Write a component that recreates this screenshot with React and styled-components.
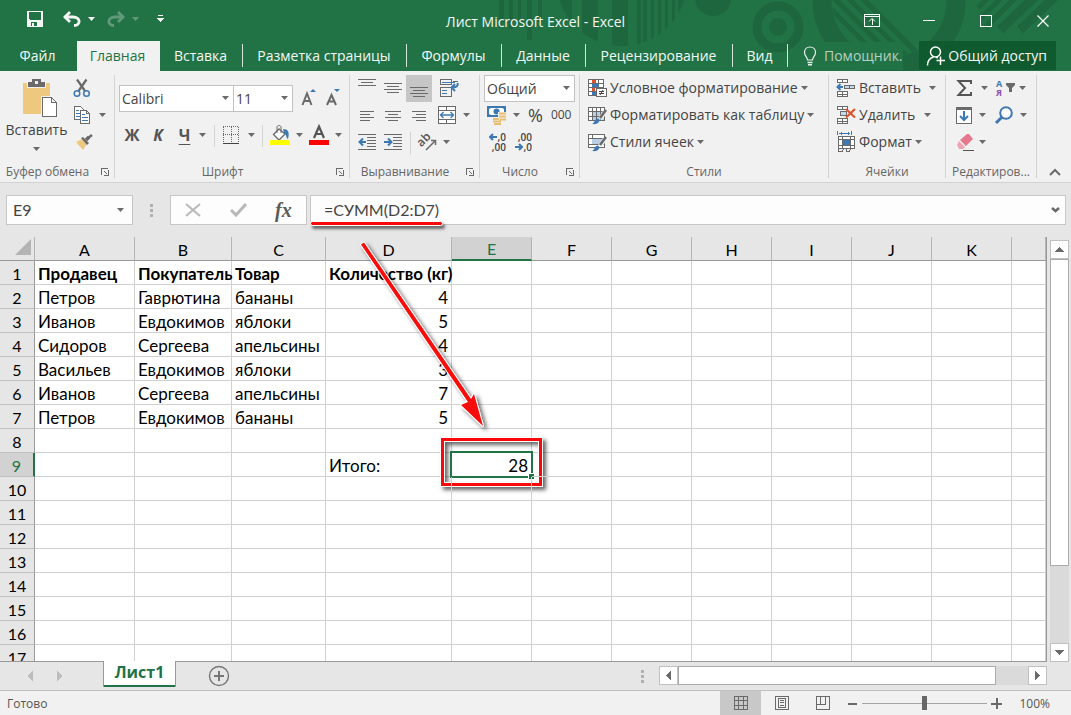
import React from "react";
import styled, { createGlobalStyle, css } from "styled-components";

const GREEN = "#217346";
const INK = "#6a6a6a";
const BLUE = "#3e78b3";
const RED = "#f80808";
const UI_FONT = '"Open Sans", "Noto Sans", sans-serif';
const CELL_FONT = 'Lato, "Noto Sans", sans-serif';

const GlobalStyle = createGlobalStyle`
  *, *::before, *::after { box-sizing: border-box; }
  body { margin: 0; font-family: ${UI_FONT}; font-size: 14px; color: #444; background: #e6e6e6; }
  button, input, select { font: inherit; color: inherit; margin: 0; }
  button { border: 0; padding: 0; background: none; cursor: pointer; }
  svg { display: block; flex: none; }
`;

const Window = styled.div`
  display: flex;
  flex-direction: column;
  height: 100vh;
  min-height: 480px;
  overflow: hidden;
`;

/* ---------- title bar and tabs ---------- */

const Header = styled.header`
  position: relative;
  background: ${GREEN};
  color: #f3f8f5;
  flex: none;
`;

const Ornament = styled.svg`
  position: absolute;
  top: 0;
  right: 0;
`;

const TitleBar = styled.div`
  position: relative;
  display: grid;
  grid-template-columns: 1fr auto 1fr;
  align-items: center;
  height: 41px;
`;

const QuickAccess = styled.div`
  display: flex;
  align-items: center;
  padding: 0 0 3px 26px;
`;

const QuickButton = styled.button`
  display: flex;
  align-items: center;
  height: 24px;
  gap: 6px;
  margin-right: ${(p) => p.$after || 18}px;
  opacity: ${(p) => (p.disabled ? 0.3 : 1)};
`;

const Title = styled.h1`
  margin: 0;
  padding-top: 2px;
  font-size: 14px;
  font-weight: 400;
`;

const WindowButtons = styled.div`
  display: flex;
  justify-content: flex-end;
`;

const WindowButton = styled.button`
  display: flex;
  align-items: center;
  justify-content: center;
  width: 57px;
  height: 38px;
`;

const TabRow = styled.nav`
  position: relative;
  display: flex;
  height: 30px;
`;

const RibbonTab = styled.button`
  position: relative;
  flex: none;
  width: ${(p) => p.$width}px;
  padding: 0 2px 2px 0;
  white-space: nowrap;
  ${(p) =>
    p.$active
      ? css`
          background: #f1f1f1;
          color: ${GREEN};
        `
      : css`
          &::after {
            content: "";
            position: absolute;
            right: 0;
            top: 3px;
            bottom: 4px;
            border-right: ${p.$plain ? 0 : 1}px solid #d6e5dc;
          }
        `}
`;

const TellMe = styled.button`
  display: flex;
  align-items: center;
  gap: 7px;
  padding: 0 0 0 15px;
  margin-right: auto;
  white-space: nowrap;
`;

const TellMeText = styled.span`
  background: ${GREEN};
  color: #b6d0c1;
  line-height: 28px;
`;

const ShareButton = styled.button`
  display: flex;
  align-items: center;
  gap: 2px;
  padding: 0 9px 0 7px;
  margin: 0 15px 1px 0;
  background: #0f5a2f;
  white-space: nowrap;
`;

/* ---------- ribbon ---------- */

const Ribbon = styled.div`
  display: flex;
  flex: none;
  height: 112px;
  padding: 4px 0;
  background: #f1f1f1;
  border-bottom: 1px solid #d2d2d2;
`;

const Group = styled.section`
  display: flex;
  flex-direction: column;
  flex: none;
  width: ${(p) => p.$width}px;
  border-right: 1px solid #d2d2d2;
`;

const GroupBody = styled.div`
  display: flex;
  flex: 1;
  padding: 0 ${(p) => p.$pad || 0}px;
`;

const GroupFooter = styled.div`
  display: flex;
  align-items: center;
  gap: 10px;
  height: 14px;
  padding: 0 5px;
`;

const GroupLabel = styled.h2`
  flex: 1;
  margin: 0;
  font-size: 12px;
  font-weight: 400;
  color: #666;
  text-align: center;
  white-space: nowrap;
`;

const Rows = styled.div`
  display: flex;
  flex-direction: column;
`;

const ToolRow = styled.div`
  display: flex;
  align-items: center;
  height: ${(p) => p.$height || 27}px;
  gap: ${(p) => p.$gap || 0}px;
  padding-left: ${(p) => p.$indent || 0}px;
`;

const Tool = styled.button`
  display: flex;
  align-items: center;
  justify-content: flex-start;
  gap: ${(p) => p.$gap ?? 6}px;
  width: ${(p) => (p.$width ? p.$width + "px" : "auto")};
  height: 27px;
  padding-bottom: 2px;
  flex: none;
  white-space: nowrap;
  ${(p) =>
    p.$pressed &&
    css`
      background: #c6c6c6;
    `}
`;

const CenterTool = styled(Tool)`
  justify-content: center;
`;

const PasteButton = styled.button`
  display: flex;
  flex-direction: column;
  align-items: center;
  width: 73px;
  padding-top: 3px;
  height: 84px;
`;

const PasteText = styled.span`
  line-height: 22px;
  padding-bottom: 6px;
`;

const Letter = styled.span`
  font-size: 16px;
  font-weight: 700;
  line-height: 20px;
  color: #555;
  font-style: ${(p) => (p.$italic ? "italic" : "normal")};
  text-decoration: ${(p) => (p.$underline ? "underline" : "none")};
  text-underline-offset: 3px;
  text-decoration-thickness: 1px;
`;

const NumberSign = styled.span`
  font-size: ${(p) => (p.$small ? 12 : 18)}px;
  color: #444;
`;

const Separator = styled.span`
  width: 1px;
  height: 22px;
  background: #d2d2d2;
`;

const SelectBox = styled.span`
  position: relative;
  display: block;
  width: ${(p) => p.$width}px;
  height: 27px;
  margin-right: -1px;
  border: 1px solid #c2c2c2;
  background: #fff;
`;

const Select = styled.select`
  appearance: none;
  display: block;
  width: 100%;
  height: 25px;
  padding: 0 18px 0 2px;
  border: 0;
  outline: 0;
  background: transparent;
`;

const SelectArrow = styled.span`
  position: absolute;
  right: 4px;
  top: 10px;
  pointer-events: none;
`;

const CollapseCorner = styled.div`
  flex: 1;
  display: flex;
  justify-content: flex-end;
  align-items: flex-end;
  padding: 0 10px 1px 0;
`;

/* ---------- formula bar ---------- */

const FormulaBar = styled.div`
  display: flex;
  flex: none;
  height: 54px;
  padding: 12px 5px 12px 6px;
`;

const NameBox = styled.label`
  display: flex;
  align-items: center;
  width: 127px;
  padding-right: 8px;
  border: 1px solid #c6c6c6;
  background: #fdfdfd;
`;

const BarInput = styled.input`
  flex: 1;
  min-width: 0;
  padding: 0 0 2px ${(p) => p.$indent}px;
  border: 0;
  outline: 0;
  background: transparent;
  font-family: ${CELL_FONT};
  font-size: 16px;
`;

const Grip = styled.span`
  display: flex;
  flex-direction: column;
  justify-content: center;
  gap: 2px;
  width: ${(p) => p.$width}px;
  align-items: center;
`;

const GripDot = styled.i`
  width: 3px;
  height: 3px;
  background: #b0b0b0;
`;

const FormulaActions = styled.div`
  display: flex;
  align-items: center;
  justify-content: space-around;
  width: 137px;
  margin-right: 3px;
  border: 1px solid #c6c6c6;
  background: #fdfdfd;
`;

const FxLabel = styled.span`
  font: italic 700 20px "Liberation Serif", serif;
  color: #5a5a5a;
`;

const FormulaBox = styled.div`
  position: relative;
  flex: 1;
  display: flex;
  align-items: center;
  padding-right: 5px;
  border: 1px solid #c6c6c6;
  background: #fdfdfd;
`;

const Underline = styled.span`
  position: absolute;
  left: -1px;
  bottom: -2px;
  width: 133px;
  height: 5px;
  border: 1px solid #fff;
  border-radius: 3px;
  background: ${RED};
  box-shadow: 2px 3px 3px rgba(0, 0, 0, 0.55);
`;

/* ---------- sheet ---------- */

const Workspace = styled.main`
  display: flex;
  flex: 1;
  min-height: 0;
  padding-right: 2px;
`;

const SheetViewport = styled.div`
  position: relative;
  flex: 1;
  min-width: 0;
  overflow: hidden;
  border-right: 1px solid #999;
  border-bottom: 1px solid #999;
  background: linear-gradient(#e6e6e6 24px, #fff 24px);
`;

const Grid = styled.table`
  width: 100%;
  table-layout: fixed;
  border-collapse: separate;
  border-spacing: 0;
  font-family: ${CELL_FONT};
  font-size: 17px;
  color: #000;
`;

const Col = styled.col`
  width: ${(p) => (p.$width ? p.$width + "px" : "auto")};
`;

const Corner = styled.td`
  height: 24px;
  padding: 0 3px 3px;
  border-bottom: 1px solid #999;
  border-right: 1px solid #b4b4b4;
  background: #e6e6e6;
`;

const CornerMark = styled.svg`
  margin-left: auto;
`;

const HeadCell = styled.th`
  height: 24px;
  padding: 2px 0 0;
  font-weight: 400;
  font-size: 16px;
  line-height: 21px;
  text-align: center;
  background: ${(p) => (p.$active ? "#d2d2d2" : "#e6e6e6")};
  color: ${(p) => (p.$active ? GREEN : "#000")};
`;

const ColumnHead = styled(HeadCell)`
  border-right: 1px solid #b4b4b4;
  border-bottom: 1px solid #999;
  ${(p) =>
    p.$active &&
    css`
      line-height: 20px;
      border-bottom: 2px solid ${GREEN};
    `}
`;

const RowHead = styled(HeadCell)`
  border-right: 1px solid #999;
  border-bottom: 1px solid #c0c0c0;
  ${(p) =>
    p.$active &&
    css`
      border-right: 2px solid ${GREEN};
    `}
`;

const Cell = styled.td`
  position: relative;
  height: 24px;
  padding: 2px 3px 0;
  line-height: 21px;
  white-space: nowrap;
  border-right: 1px solid #d0d0d0;
  border-bottom: 1px solid #d0d0d0;
  font-weight: ${(p) => (p.$bold ? 700 : 400)};
  text-align: ${(p) => (p.$number ? "right" : "left")};
`;

const Selection = styled.span`
  position: absolute;
  inset: -2px;
  border: 2px solid ${GREEN};

  &::after {
    content: "";
    position: absolute;
    right: -3px;
    bottom: -3px;
    width: 6px;
    height: 6px;
    background: ${GREEN};
    border: solid #fff;
    border-width: 1px 0 0 1px;
  }
`;

const Highlight = styled.span`
  position: absolute;
  inset: -15px -11px -10px -11px;
  border: 3px solid ${RED};
  outline: 1px solid #fff;
  box-shadow: inset 0 0 0 1px #fff, 3px 3px 4px 1px rgba(0, 0, 0, 0.6),
    inset 3px 3px 4px 1px rgba(0, 0, 0, 0.6);
`;

const Arrow = styled.svg`
  position: absolute;
  left: 350px;
  top: 0;
  pointer-events: none;
`;

const VerticalScroll = styled.div`
  display: flex;
  flex-direction: column;
  width: 19px;
  margin: 3px 0 0 3px;
  background: #dadada;
`;

const ScrollButton = styled.button`
  display: flex;
  align-items: center;
  justify-content: center;
  width: 19px;
  height: 19px;
  flex: none;
  border: 1px solid #c0c0c0;
  background: #fff;
`;

const ScrollThumb = styled.div`
  flex: ${(p) => p.$size};
  border: 1px solid #ababab;
  background: #fff;
`;

const ScrollTrack = styled.div`
  flex: ${(p) => p.$size};
`;

/* ---------- sheet tabs and status bar ---------- */

const SheetBar = styled.div`
  display: flex;
  flex: none;
  height: 28px;
  padding-right: 24px;
`;

const SheetNav = styled.div`
  display: flex;
  width: 103px;
  padding-left: 27px;
  gap: 24px;
`;

const NavButton = styled.button`
  height: 28px;
`;

const SheetTab = styled.button`
  position: relative;
  width: 73px;
  height: 26px;
  margin-top: -1px;
  padding-bottom: 4px;
  font-size: 16px;
  line-height: 20px;
  font-weight: 700;
  color: ${GREEN};
  background: #fff;
  border: solid #999;
  border-width: 0 1px;
  box-shadow: inset 0 -2px 0 ${GREEN};
`;

const AddSheet = styled.button`
  margin: 0 auto 0 32px;
`;

const HorizontalScroll = styled.div`
  display: flex;
  width: 388px;
  height: 19px;
  margin-top: 4px;
  background: #dadada;
`;

const StatusBar = styled.footer`
  display: flex;
  align-items: center;
  flex: none;
  height: 25px;
  padding-right: 21px;
  border-top: 1px solid #c0c0c0;
  background: #f1f1f1;
  font-size: 12px;
  color: #555;
`;

const StatusText = styled.span`
  flex: 1;
  padding-left: 7px;
`;

const ViewButton = styled.button`
  display: flex;
  align-items: center;
  justify-content: center;
  width: 41px;
  height: 24px;
  background: ${(p) => (p.$active ? "#c8c8c8" : "transparent")};
`;

const ZoomButton = styled.button`
  margin: 0 4px;
`;

const ZoomSlider = styled.input`
  appearance: none;
  width: 125px;
  height: 14px;
  background: linear-gradient(#a6a6a6, #a6a6a6) center / 100% 1px no-repeat;

  &::-webkit-slider-thumb {
    appearance: none;
    width: 5px;
    height: 14px;
    background: #666;
  }
`;

const ZoomValue = styled.span`
  width: 44px;
  text-align: right;
`;

/* ---------- icons ---------- */

const Icon = ({ w = 20, h = 20, stroke = INK, soft, children }) => (
  <svg
    width={w}
    height={h}
    viewBox={`0 0 ${w} ${h}`}
    fill="none"
    stroke={stroke}
    shapeRendering={soft ? "auto" : "crispEdges"}
    aria-hidden="true"
  >
    {children}
  </svg>
);

const Caret = ({ color = INK }) => (
  <svg width="7" height="4" viewBox="0 0 7 4" aria-hidden="true">
    <path d="M0 0H7L3.500 4Z" fill={color} />
  </svg>
);

const SaveIcon = () => (
  <Icon w={18} h={18} stroke="none">
    <path
      fill="#f5f5f5"
      fillRule="evenodd"
      d="M1 1H17V17H1ZM3 2V9L4 10H14L15 9V2ZM5 12V16H6V13H8V16H11V12Z"
    />
  </Icon>
);

const UndoIcon = () => (
  <Icon w={20} h={18} soft stroke="#f5f5f5">
    <path d="M2.500 7H11C19 7 19 15.500 12 15.500" strokeWidth="2.800" />
    <path d="M8 2L3 7L8 12" strokeWidth="2.800" />
  </Icon>
);

const RedoIcon = () => (
  <Icon w={20} h={18} soft stroke="#f5f5f5">
    <path d="M17.500 7H9C1 7 1 15.500 8 15.500" strokeWidth="2.800" />
    <path d="M12 2L17 7L12 12" strokeWidth="2.800" />
  </Icon>
);

const CustomizeIcon = () => (
  <Icon w={7} h={8} stroke="none">
    <path fill="#f5f5f5" d="M1 0H6V1H1ZM0 3H7L3.500 7Z" />
  </Icon>
);

const PasteIcon = () => (
  <Icon w={42} h={41} stroke="none">
    <g transform="translate(6 0)">
      <path fill="#edc87e" d="M1 5H28V36H1Z" />
      <path fill="#f1f1f1" d="M5 3H24V10H5Z" />
      <path fill={INK} d="M6 4H10V2C10 1 11 1 12 1H17C18 1 19 1 19 2V4H23V9H6Z" />
      <path fill="#f1f1f1" d="M13 3H16V6H13Z" />
      <path fill="#fff" stroke="#f1f1f1" strokeWidth="3" d="M20.500 19.500H29.500L34.500 24.500V38.500H20.500Z" />
      <path fill="#fff" stroke={INK} d="M20.500 19.500H29.500L34.500 24.500V38.500H20.500ZM29.500 19.500V24.500H34.500" />
    </g>
  </Icon>
);

const CutIcon = () => (
  <Icon w={18} h={20} soft>
    <path d="M4 1.500L12 13M13.500 1.500L5.500 13" strokeWidth="2.200" />
    <circle cx="4" cy="15.500" r="2.800" stroke={BLUE} strokeWidth="1.500" />
    <circle cx="13.500" cy="15.500" r="2.800" stroke={BLUE} strokeWidth="1.500" />
  </Icon>
);

const CopyIcon = () => (
  <Icon w={18} h={18}>
    <path fill="#fff" d="M1.500 .5H7.500L10.500 3.500V13.500H1.500Z" />
    <path stroke={BLUE} d="M3 4.500H6M3 7.500H8M3 10.500H8" />
    <path fill="#fff" d="M7.500 4.500H13.500L16.500 7.500V17.500H7.500ZM13.500 4.500V7.500H16.500" />
    <path stroke={BLUE} d="M9 8.500H12M9 11.500H15M9 14.500H15" />
  </Icon>
);

const BrushIcon = () => (
  <Icon w={18} h={18} soft stroke="none">
    <path fill="#edc87e" d="M1 9L7 6L12 11L8 17Z" />
    <path fill={INK} d="M6 5L8 4L14 10L12 12Z" />
    <path stroke={INK} strokeWidth="3.500" d="M11 7L14 4" />
    <path stroke={INK} strokeWidth="2.500" d="M13 5L17 2" />
  </Icon>
);

const GrowFontIcon = ({ shrink }) => (
  <Icon w={20} h={20} soft>
    <path
      d={shrink ? "M2 17L6.500 7L11 17M4 13.500H9" : "M2.500 17L7 5.500L11.500 17M4.500 13H9.500"}
      strokeWidth="2"
    />
    <path fill={BLUE} stroke="none" d={shrink ? "M9 1H15L12 4Z" : "M10 4H16L13 1Z"} />
  </Icon>
);

const BorderIcon = () => (
  <Icon w={18} h={18}>
    <path strokeDasharray="1 1" d="M1 .5H17M1.500 1V17M16.500 1V17M9.500 1V16M1 8.500H17" />
    <path d="M1 17.500H17" stroke="#444" />
  </Icon>
);

const FillIcon = () => (
  <Icon w={20} h={22} soft>
    <path fill="#fff" strokeWidth="1.300" d="M9 5L15 10L9 16L3.500 10.500Z" />
    <path d="M7 9V3C7 1 11 1 11 3V9" />
    <path fill={BLUE} stroke="none" d="M13 5C18 5 20 8 18 15C16 14 17 11 14 9Z" />
    <path fill="#ff0" stroke="none" d="M0 16H20V21H0Z" />
  </Icon>
);

const FontColorIcon = () => (
  <Icon w={20} h={22} soft>
    <path d="M5 14L10 2.500L15 14M7 10H13" stroke="#555" strokeWidth="2.200" />
    <path fill="red" stroke="none" d="M0 16H20V21H0Z" />
  </Icon>
);

const LinesIcon = ({ d, w = 18 }) => (
  <Icon w={w} h={19}>
    <path d={d} />
  </Icon>
);

const WrapIcon = () => (
  <Icon w={20} h={20}>
    <path d="M1.500 1.500H12.500V6.500H1.500ZM1.500 9.500H12.500V18.500H1.500ZM14 3.500H19" />
    <path stroke={BLUE} d="M3 4.500H16M3 12.500H8M3 15.500H8" />
    <path
      stroke={BLUE}
      strokeWidth="2"
      shapeRendering="auto"
      d="M18.500 5C19.500 8 17 9.500 13 9.500M16 6L12.500 9.500L16 13"
    />
  </Icon>
);

const MergeIcon = () => (
  <Icon w={20} h={20}>
    <path fill="#fff" d="M1.500 1.500H18.500V18.500H1.500ZM1 5.500H19M1 14.500H19M9.500 1V5M9.500 15V18" />
    <path stroke={BLUE} strokeWidth="1.400" shapeRendering="auto" d="M4 10H16M6.500 7L3.500 10L6.500 13M13.500 7L16.500 10L13.500 13" />
  </Icon>
);

const IndentIcon = ({ right }) => (
  <Icon w={18} h={19}>
    <path d="M0 2.500H18M9 5.500H18M9 8.500H18M9 11.500H18M9 14.500H18M0 17.500H18" />
    <path
      stroke={BLUE}
      strokeWidth="2"
      shapeRendering="auto"
      d={right ? "M0 10H7M4 6.500L7.500 10L4 13.500" : "M8 10H1M5 6.500L1.500 10L5 13.500"}
    />
  </Icon>
);

const OrientationIcon = () => (
  <Icon w={20} h={20} soft>
    <text x="2" y="14" transform="rotate(-45 5 12)" fontSize="12" fontWeight="600" fill="#555" stroke="none">
      ab
    </text>
    <path strokeWidth="1.500" d="M9 18L18 9M14 8.500H18.500V13" />
  </Icon>
);

const MoneyIcon = () => (
  <Icon w={20} h={20} soft stroke="none">
    <path fill={BLUE} d="M0 1H19V12H0Z" />
    <path fill="#fff" d="M2 4L4 3H15L17 4V9L15 10H4L2 9Z" />
    <circle cx="9.500" cy="6.500" r="3" fill={BLUE} />
    <path fill="#f1f1f1" d="M11 7H20V20H5V12H11Z" />
    <path
      stroke="#e8bd70"
      strokeWidth="2"
      d="M12 8.500H19M12 11.500H19M13 14.500H19M6 14H12M6 16.500H14M7 19H14"
    />
  </Icon>
);

const DecimalStack = styled.span`
  display: grid;
  justify-items: end;
  width: 18px;
  font-size: 10px;
  line-height: 10px;
  font-weight: 600;
`;

const DecimalLine = styled.span`
  display: flex;
  align-items: center;
  gap: 1px;
`;

const SmallArrow = ({ right }) => (
  <Icon w={8} h={8} soft stroke={BLUE}>
    <path strokeWidth="2" d={right ? "M0 4H7M4 1L7 4L4 7" : "M8 4H1M4 1L1 4L4 7"} />
  </Icon>
);

const ConditionalIcon = () => (
  <Icon w={20} h={20}>
    <path fill="#fff" d="M1.500 1.500H16.500V17.500H1.500ZM5.500 1V17M11.500 1V17M1 5.500H17M1 9.500H17M1 13.500H17" />
    <path fill="#d9532c" stroke="none" d="M5 2H9V5H5ZM5 10H8V13H5Z" />
    <path fill={BLUE} stroke="none" d="M5 6H12V9H5ZM5 14H9V17H5Z" />
    <path fill="#fff" d="M9.500 10.500H19.500V18.500H9.500Z" />
    <path stroke="#444" shapeRendering="auto" d="M12 13.500H17M12 15.500H17M16 12L13 17" />
  </Icon>
);

const TableBrushIcon = ({ plain }) => (
  <Icon w={20} h={20}>
    <path fill="#fff" d="M1.500 2.500H17.500V15.500H1.500Z" />
    <path fill="#b9cde5" stroke="none" d={plain ? "M5 7H15V12H5Z" : "M5 6H17V15H5Z"} />
    <path d={plain ? "M1 6.500H17M5.500 2V6M1 12.500H17" : "M1 6.500H17M1 11.500H17M5.500 2V15M9.500 2V15M13.500 2V15"} />
    <path shapeRendering="auto" stroke="#f1f1f1" strokeWidth="4.500" d="M18.500 6L13 14" />
    <path shapeRendering="auto" strokeWidth="2.600" d="M19 5L13 13" />
    <path shapeRendering="auto" fill={BLUE} stroke="none" d="M5 19C8 18 7 14 11 13.500C14 15 12 20 5 19Z" />
  </Icon>
);

const InsertCellsIcon = () => (
  <Icon w={20} h={20}>
    <path fill="#fff" d="M1.500 1.500H11.500V4.500H1.500ZM6.500 1V4M1.500 13.500H11.500V18.500H1.500ZM6.500 13V18M1 16.500H11" />
    <path fill="#c9d8ea" d="M8.500 7.500H18.500V10.500H8.500ZM13.500 7V10" />
    <path shapeRendering="auto" stroke={BLUE} strokeWidth="2" d="M7 9H2M4.500 6L1.500 9L4.500 12" />
  </Icon>
);

const DeleteCellsIcon = () => (
  <Icon w={20} h={20}>
    <path fill="#fff" d="M1.500 1.500H11.500V4.500H1.500ZM6.500 1V4M1.500 13.500H11.500V18.500H1.500ZM6.500 13V18M1 16.500H11" />
    <path fill="#c9d8ea" d="M4.500 6.500H10.500V10.500H4.500Z" />
    <path shapeRendering="auto" stroke="#d9532c" strokeWidth="2.200" d="M10 4L19 12.500M19 4L10 12.500" />
  </Icon>
);

const FormatCellsIcon = () => (
  <Icon w={20} h={21}>
    <path fill="#fff" d="M2.500 5.500H18.500V17.500H2.500ZM6.500 5V18M14.500 5V18M2 8.500H18M2 14.500H18" />
    <path d="M2.500 18V20.500H6L8 18M10 18V20.500H13L15 18" />
    <path fill={BLUE} stroke="none" d="M7 9H14V14H7Z" />
    <path stroke={BLUE} d="M1.500 0V4M15.500 0V4M3 2.500H14M5.500 1V4M12.500 1V4" />
  </Icon>
);

const SumIcon = () => (
  <Icon w={18} h={18} soft>
    <path stroke="#555" strokeWidth="2" d="M16 5V2H3.500L10 9L3.500 16H16V13" />
  </Icon>
);

const SortText = styled.span`
  display: grid;
  font-size: 9px;
  line-height: 9px;
  font-weight: 700;
  color: ${BLUE};
`;

const SortLower = styled.span`
  color: #8e4fae;
`;

const FunnelIcon = () => (
  <Icon w={9} h={10} soft stroke="none">
    <path fill={INK} d="M0 0H9V2L6 5V9H3V5L0 2Z" />
  </Icon>
);

const FillDownIcon = () => (
  <Icon w={18} h={18}>
    <path fill="#fff" d="M1.500 1.500H16.500V17.500H1.500Z" />
    <path fill={INK} stroke="none" d="M1 1H17V4H1Z" />
    <path shapeRendering="auto" stroke={BLUE} strokeWidth="2" d="M9 5V14M5 10L9 14L13 10" />
  </Icon>
);

const FindIcon = () => (
  <Icon w={20} h={20} soft stroke={BLUE}>
    <circle cx="12" cy="8" r="5.800" strokeWidth="2" fill="#fff" />
    <path strokeWidth="3" d="M8 12L2 18" />
  </Icon>
);

const EraserIcon = () => (
  <Icon w={20} h={18} soft stroke="none">
    <path fill="#e5788d" d="M12 1H14L18 6L11 13L5 7Z" />
    <path fill="#efa5b2" d="M4 8L10 14L8 16H4L2 12Z" />
    <path stroke="#555" d="M8 17.500H19" />
  </Icon>
);

const LauncherIcon = () => (
  <Icon w={9} h={9}>
    <path d="M1.500 8V1.500H8M4 4L7 7M8.500 3V8.500H4" />
  </Icon>
);

const BulbIcon = () => (
  <Icon w={14} h={20} soft stroke="#e9f1ec">
    <path strokeWidth="1.200" d="M4.500 14C4.500 11 1.500 10 1.500 6.500C1.500 3 4 1 7 1S12.500 3 12.500 6.500C12.500 10 9.500 11 9.500 14Z" />
    <path strokeWidth="1.500" d="M4.500 16.500H9.500M5 18.800H9" />
  </Icon>
);

const PersonIcon = () => (
  <Icon w={20} h={20} soft stroke="#fff">
    <circle cx="9.500" cy="6" r="5" strokeWidth="1.500" />
    <path strokeWidth="1.500" d="M1.500 19.500C1.500 15 4 12 7.500 11M10 11.500H12M14.500 10.500V19M10.500 14.500H19" />
  </Icon>
);

const Decor = () => (
  <Ornament width="575" height="71" viewBox="0 0 575 71" aria-hidden="true">
    <defs>
      <clipPath id="stripedDisc">
        <circle cx="126" cy="-19" r="65" />
      </clipPath>
      <clipPath id="ringHole">
        <circle cx="393" cy="0" r="57" />
      </clipPath>
    </defs>
    <g fill="#1e663d">
      <path d="M3 0H8V22H3ZM13 0H17V29H13ZM22 0H25V24H22ZM31 0H36V40H31ZM42 0H46V22H42Z" />
      <path
        clipPath="url(#stripedDisc)"
        d="M60 0H76V50H60ZM86 0H102V50H86ZM116 0H132V50H116ZM141 0H145V50H141ZM147 0H151V50H147ZM155 0H158V50H155ZM162 0H165V50H162ZM169 0H172V50H169ZM176 0H179V50H176ZM182 0H188V50H182Z"
      />
      <circle cx="217" cy="-2" r="18" />
      <circle cx="282" cy="27" r="9" />
    </g>
    <g fill="none" stroke="#1e663d">
      <circle cx="282" cy="27" r="21" strokeWidth="9" />
      <circle cx="393" cy="0" r="67" strokeWidth="19" />
      <g clipPath="url(#ringHole)" strokeWidth="5">
        <path d="M318 -8L398 72M332 -8L412 72M346 -8L426 72M360 -8L440 72" />
      </g>
      <path strokeWidth="5" d="M502 -12L482 8M515 -12L485 18M529 -12L489 28" />
      <path strokeWidth="9" d="M548 -12L504 30M568 -12L524 30" />
    </g>
  </Ornament>
);

/* ---------- data ---------- */

const TABS = [
  { text: "Файл", width: 77, plain: true },
  { text: "Главная", width: 83, active: true },
  { text: "Вставка", width: 83 },
  { text: "Разметка страницы", width: 164 },
  { text: "Формулы", width: 95 },
  { text: "Данные", width: 84 },
  { text: "Рецензирование", width: 147 },
  { text: "Вид", width: 55 },
];

const COLUMNS = [
  ["A", 100],
  ["B", 97],
  ["C", 94],
  ["D", 126],
  ["E", 80],
  ["F", 80],
  ["G", 80],
  ["H", 80],
  ["I", 80],
  ["J", 80],
  ["K", 80],
  ["", 0],
];

const SHEET = {
  1: ["Продавец", "Покупатель", "Товар", "Количество (кг)"],
  2: ["Петров", "Гаврютина", "бананы", 4],
  3: ["Иванов", "Евдокимов", "яблоки", 5],
  4: ["Сидоров", "Сергеева", "апельсины", 4],
  5: ["Васильев", "Евдокимов", "яблоки", 3],
  6: ["Иванов", "Сергеева", "апельсины", 7],
  7: ["Петров", "Евдокимов", "бананы", 5],
  9: ["", "", "", "Итого:", 28],
};

const ROW_NUMBERS = Array.from({ length: 17 }, (_, i) => i + 1);

/* ---------- parts ---------- */

const RibbonGroup = ({ label, width, pad, launcher, children }) => (
  <Group $width={width} aria-label={label}>
    <GroupBody $pad={pad}>{children}</GroupBody>
    <GroupFooter>
      <GroupLabel>{label}</GroupLabel>
      {launcher && (
        <button aria-label={`${label}: параметры`}>
          <LauncherIcon />
        </button>
      )}
    </GroupFooter>
  </Group>
);

const DropDown = ({ label, value, width }) => (
  <SelectBox $width={width}>
    <Select aria-label={label} defaultValue={value}>
      <option>{value}</option>
    </Select>
    <SelectArrow>
      <Caret />
    </SelectArrow>
  </SelectBox>
);

const Dots = ({ width }) => (
  <Grip $width={width}>
    <GripDot />
    <GripDot />
    <GripDot />
  </Grip>
);

const Top = () => (
  <Header>
    <Decor />
    <TitleBar>
      <QuickAccess>
        <QuickButton aria-label="Сохранить"><SaveIcon /></QuickButton>
        <QuickButton aria-label="Отменить" $after={11}><UndoIcon /><Caret color="#f5f5f5" /></QuickButton>
        <QuickButton aria-label="Вернуть" disabled><RedoIcon /><Caret color="#f5f5f5" /></QuickButton>
        <QuickButton aria-label="Настройка панели"><CustomizeIcon /></QuickButton>
      </QuickAccess>
      <Title>Лист Microsoft Excel - Excel</Title>
      <WindowButtons>
        <WindowButton aria-label="Параметры ленты">
          <Icon w={16} h={13} stroke="#fff">
            <path d="M.5 .5H15.500V12.500H.5ZM1 2.500H15M8 4.500V11" />
            <path shapeRendering="auto" d="M5 7.500L8 4.500L11 7.500" />
          </Icon>
        </WindowButton>
        <WindowButton aria-label="Свернуть">
          <Icon w={12} h={12} stroke="#fff"><path d="M0 5.500H12" /></Icon>
        </WindowButton>
        <WindowButton aria-label="Развернуть">
          <Icon w={12} h={12} stroke="#fff"><path d="M.5 .5H11.500V11.500H.5Z" /></Icon>
        </WindowButton>
        <WindowButton aria-label="Закрыть">
          <Icon w={12} h={12} soft stroke="#fff"><path strokeWidth="1.200" d="M.5 .5L11.500 11.500M11.500 .5L.5 11.500" /></Icon>
        </WindowButton>
      </WindowButtons>
    </TitleBar>
    <TabRow>
      {TABS.map((t) => (
        <RibbonTab key={t.text} $width={t.width} $active={t.active} $plain={t.plain}>
          {t.text}
        </RibbonTab>
      ))}
      <TellMe><BulbIcon /><TellMeText>Помощник.</TellMeText></TellMe>
      <ShareButton><PersonIcon />Общий доступ</ShareButton>
    </TabRow>
  </Header>
);

const Clipboard = () => (
  <RibbonGroup label="Буфер обмена" width={115} launcher>
    <PasteButton>
      <PasteIcon />
      <PasteText>Вставить</PasteText>
      <Caret />
    </PasteButton>
    <Rows>
      <ToolRow><Tool aria-label="Вырезать"><CutIcon /></Tool></ToolRow>
      <ToolRow><Tool aria-label="Копировать" $gap={8}><CopyIcon /><Caret /></Tool></ToolRow>
      <ToolRow $indent={2}><Tool aria-label="Формат по образцу"><BrushIcon /></Tool></ToolRow>
    </Rows>
  </RibbonGroup>
);

const Font = () => (
  <RibbonGroup label="Шрифт" width={235} pad={4} launcher>
    <Rows>
      <ToolRow $height={47}>
        <DropDown label="Шрифт" value="Calibri" width={115} />
        <DropDown label="Размер" value="11" width={60} />
        <ToolRow $gap={5} $indent={8}>
          <Tool aria-label="Увеличить размер шрифта"><GrowFontIcon /></Tool>
          <Tool aria-label="Уменьшить размер шрифта"><GrowFontIcon shrink /></Tool>
        </ToolRow>
      </ToolRow>
      <ToolRow>
        <CenterTool $width={26} aria-label="Полужирный"><Letter>Ж</Letter></CenterTool>
        <CenterTool $width={26} aria-label="Курсив"><Letter $italic>К</Letter></CenterTool>
        <CenterTool $width={43} $gap={9} aria-label="Подчеркнутый"><Letter $underline>Ч</Letter><Caret /></CenterTool>
        <Separator />
        <CenterTool $width={47} $gap={8} aria-label="Границы"><BorderIcon /><Caret /></CenterTool>
        <Separator />
        <CenterTool $width={46} aria-label="Цвет заливки"><FillIcon /><Caret /></CenterTool>
        <CenterTool $width={33} aria-label="Цвет шрифта"><FontColorIcon /><Caret /></CenterTool>
      </ToolRow>
    </Rows>
  </RibbonGroup>
);

const Alignment = () => (
  <RibbonGroup label="Выравнивание" width={130} pad={4} launcher>
    <Rows>
      <ToolRow>
        <CenterTool $width={26} aria-label="По верхнему краю"><LinesIcon d="M0 1.500H18M3 4.500H15M0 7.500H18" /></CenterTool>
        <CenterTool $width={26} aria-label="По середине"><LinesIcon d="M0 5.500H18M3 8.500H15M0 11.500H18M3 14.500H15" /></CenterTool>
        <CenterTool $width={26} $pressed aria-label="По нижнему краю"><LinesIcon d="M0 9.500H18M3 12.500H15M0 15.500H18M3 18.500H15" /></CenterTool>
        <CenterTool $width={33} aria-label="Переносить текст"><WrapIcon /></CenterTool>
      </ToolRow>
      <ToolRow>
        <CenterTool $width={26} aria-label="По левому краю"><LinesIcon w={14} d="M0 6.500H14M0 9.500H10M0 12.500H14M0 15.500H10" /></CenterTool>
        <CenterTool $width={26} aria-label="По центру"><LinesIcon w={16} d="M0 6.500H16M3 9.500H13M0 12.500H16M3 15.500H13" /></CenterTool>
        <CenterTool $width={26} aria-label="По правому краю"><LinesIcon w={14} d="M0 6.500H14M4 9.500H14M0 12.500H14M4 15.500H14" /></CenterTool>
        <CenterTool $width={42} aria-label="Объединить и поместить в центре"><MergeIcon /><Caret /></CenterTool>
      </ToolRow>
      <ToolRow>
        <CenterTool $width={26} aria-label="Уменьшить отступ"><IndentIcon /></CenterTool>
        <CenterTool $width={26} aria-label="Увеличить отступ"><IndentIcon right /></CenterTool>
        <ToolRow $indent={4}>
          <Separator />
          <CenterTool $width={44} aria-label="Ориентация"><OrientationIcon /><Caret /></CenterTool>
        </ToolRow>
      </ToolRow>
    </Rows>
  </RibbonGroup>
);

const Numbers = () => (
  <RibbonGroup label="Число" width={100} pad={4} launcher>
    <Rows>
      <ToolRow><DropDown label="Числовой формат" value="Общий" width={91} /></ToolRow>
      <ToolRow $gap={8} $indent={3}>
        <Tool aria-label="Финансовый числовой формат"><MoneyIcon /><Caret /></Tool>
        <Tool aria-label="Процентный формат"><NumberSign>%</NumberSign></Tool>
        <Tool aria-label="Формат с разделителями"><NumberSign $small>000</NumberSign></Tool>
      </ToolRow>
      <ToolRow $gap={8} $indent={4}>
        <Tool aria-label="Увеличить разрядность">
          <DecimalStack>
            <DecimalLine><SmallArrow />,0</DecimalLine>
            <DecimalLine>,00</DecimalLine>
          </DecimalStack>
        </Tool>
        <Tool aria-label="Уменьшить разрядность">
          <DecimalStack>
            <DecimalLine>,00</DecimalLine>
            <DecimalLine><SmallArrow right />,0</DecimalLine>
          </DecimalStack>
        </Tool>
      </ToolRow>
    </Rows>
  </RibbonGroup>
);

const Push = styled.span`
  flex: 1;
`;

const LabeledTool = ({ icon, text, width }) => (
  <ToolRow>
    <Tool $gap={3} $width={width}>
      {icon}
      {text}
      {width && <Push />}
      <Caret />
    </Tool>
  </ToolRow>
);

const Styles = () => (
  <RibbonGroup label="Стили" width={249} pad={7}>
    <Rows>
      <LabeledTool icon={<ConditionalIcon />} text="Условное форматирование" />
      <LabeledTool icon={<TableBrushIcon />} text="Форматировать как таблицу" />
      <LabeledTool icon={<TableBrushIcon plain />} text="Стили ячеек" />
    </Rows>
  </RibbonGroup>
);

const Cells = () => (
  <RibbonGroup label="Ячейки" width={117} pad={7}>
    <Rows>
      <LabeledTool icon={<InsertCellsIcon />} text="Вставить" width={100} />
      <LabeledTool icon={<DeleteCellsIcon />} text="Удалить" width={95} />
      <LabeledTool icon={<FormatCellsIcon />} text="Формат" />
    </Rows>
  </RibbonGroup>
);

const Editing = () => (
  <RibbonGroup label="Редактиров..." width={91} pad={9}>
    <Rows>
      <ToolRow $gap={8}>
        <Tool aria-label="Сумма" $gap={8}><SumIcon /><Caret /></Tool>
        <Tool aria-label="Сортировка и фильтр" $gap={4}>
          <SortText>А<SortLower>Я</SortLower></SortText>
          <FunnelIcon />
          <Caret />
        </Tool>
      </ToolRow>
      <ToolRow $gap={8}>
        <Tool aria-label="Заполнить"><FillDownIcon /><Caret /></Tool>
        <Tool aria-label="Найти и выделить"><FindIcon /><Caret /></Tool>
      </ToolRow>
      <ToolRow>
        <Tool aria-label="Очистить" $gap={4}><EraserIcon /><Caret /></Tool>
      </ToolRow>
    </Rows>
  </RibbonGroup>
);

const Formula = () => (
  <FormulaBar>
    <NameBox>
      <BarInput $indent={6} aria-label="Имя ячейки" defaultValue="E9" />
      <Caret />
    </NameBox>
    <Dots width={37} />
    <FormulaActions>
      <button aria-label="Отмена">
        <Icon w={16} h={14} soft stroke="#b8b8b8"><path strokeWidth="2" d="M1 1L15 13M15 1L1 13" /></Icon>
      </button>
      <button aria-label="Ввод">
        <Icon w={17} h={14} soft stroke="#b8b8b8"><path strokeWidth="3" d="M1 7L6 12L16 1" /></Icon>
      </button>
      <button aria-label="Вставить функцию"><FxLabel>fx</FxLabel></button>
    </FormulaActions>
    <FormulaBox>
      <BarInput $indent={13} aria-label="Строка формул" defaultValue="=СУММ(D2:D7)" />
      <button aria-label="Развернуть строку формул">
        <Icon w={9} h={6} soft><path strokeWidth="2.500" d="M1 1L4.500 4L8 1" /></Icon>
      </button>
      <Underline />
    </FormulaBox>
  </FormulaBar>
);

const Sheet = () => (
  <Workspace>
    <SheetViewport>
      <Grid>
        <colgroup>
          <Col $width={35} />
          {COLUMNS.map(([name, width]) => (
            <Col key={name} $width={width} />
          ))}
        </colgroup>
        <thead>
          <tr>
            <Corner>
              <CornerMark width="16" height="16" viewBox="0 0 16 16" aria-hidden="true">
                <path d="M16 0V16H0Z" fill="#b4b4b4" />
              </CornerMark>
            </Corner>
            {COLUMNS.map(([name]) => (
              <ColumnHead key={name} scope="col" $active={name === "E"}>{name}</ColumnHead>
            ))}
          </tr>
        </thead>
        <tbody>
          {ROW_NUMBERS.map((n) => (
            <tr key={n}>
              <RowHead scope="row" $active={n === 9}>{n}</RowHead>
              {COLUMNS.map(([name], c) => {
                const value = SHEET[n]?.[c];
                const selected = n === 9 && name === "E";
                return (
                  <Cell key={name} $bold={n === 1} $number={typeof value === "number"}>
                    {value}
                    {selected && <Highlight />}
                    {selected && <Selection />}
                  </Cell>
                );
              })}
            </tr>
          ))}
        </tbody>
      </Grid>
      <Arrow width="150" height="210" viewBox="0 0 150 210" aria-hidden="true">
        <defs>
          <filter id="arrowShadow" x="-20%" y="-20%" width="140%" height="140%">
            <feDropShadow dx="3" dy="3" stdDeviation="2" floodOpacity="0.6" />
          </filter>
        </defs>
        <g filter="url(#arrowShadow)" fill={RED} strokeLinejoin="round">
          <path stroke="#fff" strokeWidth="2" d="M11 7.500L14 5.500L121 162L124 157L133 189L111 168L118 165Z" />
          <path d="M11 7.500L14 5.500L121 162L124 157L133 189L111 168L118 165Z" />
        </g>
      </Arrow>
    </SheetViewport>
    <VerticalScroll>
      <ScrollButton aria-label="Вверх">
        <Icon w={9} h={5} stroke="none"><path fill={INK} d="M0 5L4.500 0L9 5Z" /></Icon>
      </ScrollButton>
      <ScrollThumb $size={307} />
      <ScrollTrack $size={78} />
      <ScrollButton aria-label="Вниз">
        <Icon w={9} h={5} stroke="none"><path fill={INK} d="M0 0H9L4.500 5Z" /></Icon>
      </ScrollButton>
    </VerticalScroll>
  </Workspace>
);

const Bottom = () => (
  <>
    <SheetBar>
      <SheetNav>
        <NavButton aria-label="Предыдущий лист">
          <Icon w={6} h={10} stroke="none"><path fill="#bcbcbc" d="M6 0V10L0 5Z" /></Icon>
        </NavButton>
        <NavButton aria-label="Следующий лист">
          <Icon w={6} h={10} stroke="none"><path fill="#bcbcbc" d="M0 0V10L6 5Z" /></Icon>
        </NavButton>
      </SheetNav>
      <SheetTab>Лист1</SheetTab>
      <AddSheet aria-label="Новый лист">
        <Icon w={22} h={22} soft stroke="#777">
          <circle cx="11" cy="11" r="9.500" strokeWidth="1.400" />
          <path strokeWidth="2" d="M6 11H16M11 6V16" />
        </Icon>
      </AddSheet>
      <Dots width={34} />
      <HorizontalScroll>
        <ScrollButton aria-label="Влево">
          <Icon w={5} h={9} stroke="none"><path fill={INK} d="M5 0V9L0 4.500Z" /></Icon>
        </ScrollButton>
        <ScrollThumb $size={318} />
        <ScrollTrack $size={32} />
        <ScrollButton aria-label="Вправо">
          <Icon w={5} h={9} stroke="none"><path fill={INK} d="M0 0V9L5 4.500Z" /></Icon>
        </ScrollButton>
      </HorizontalScroll>
    </SheetBar>
    <StatusBar>
      <StatusText>Готово</StatusText>
      <ViewButton $active aria-label="Обычный">
        <Icon w={14} h={14}><path d="M.5 .5H13.500V13.500H.5ZM4.500 0V14M9.500 0V14M0 4.500H14M0 9.500H14" /></Icon>
      </ViewButton>
      <ViewButton aria-label="Разметка страницы">
        <Icon w={14} h={14}><path d="M.5 .5H13.500V13.500H.5ZM3.500 2.500H10.500V11.500H3.500ZM5 4.500H9M5 6.500H9M5 9.500H9" /></Icon>
      </ViewButton>
      <ViewButton aria-label="Страничный режим">
        <Icon w={14} h={14}><path d="M.5 .5H13.500V13.500H.5ZM4.500 0V8M9.500 0V8M0 8.500H10" /></Icon>
      </ViewButton>
      <ZoomButton aria-label="Уменьшить масштаб">
        <Icon w={11} h={11}><path strokeWidth="2" d="M1 6H10" /></Icon>
      </ZoomButton>
      <ZoomSlider type="range" min="0" max="100" defaultValue="50" aria-label="Масштаб" />
      <ZoomButton aria-label="Увеличить масштаб">
        <Icon w={11} h={11}><path strokeWidth="2" d="M0 6H11M6 0V11" /></Icon>
      </ZoomButton>
      <ZoomValue>100%</ZoomValue>
    </StatusBar>
  </>
);

export default function App() {
  return (
    <Window>
      <GlobalStyle />
      <Top />
      <Ribbon>
        <Clipboard />
        <Font />
        <Alignment />
        <Numbers />
        <Styles />
        <Cells />
        <Editing />
        <CollapseCorner>
          <button aria-label="Свернуть ленту">
            <Icon w={12} h={9} soft><path strokeWidth="2" d="M1 7L6 2L11 7" /></Icon>
          </button>
        </CollapseCorner>
      </Ribbon>
      <Formula />
      <Sheet />
      <Bottom />
    </Window>
  );
}
